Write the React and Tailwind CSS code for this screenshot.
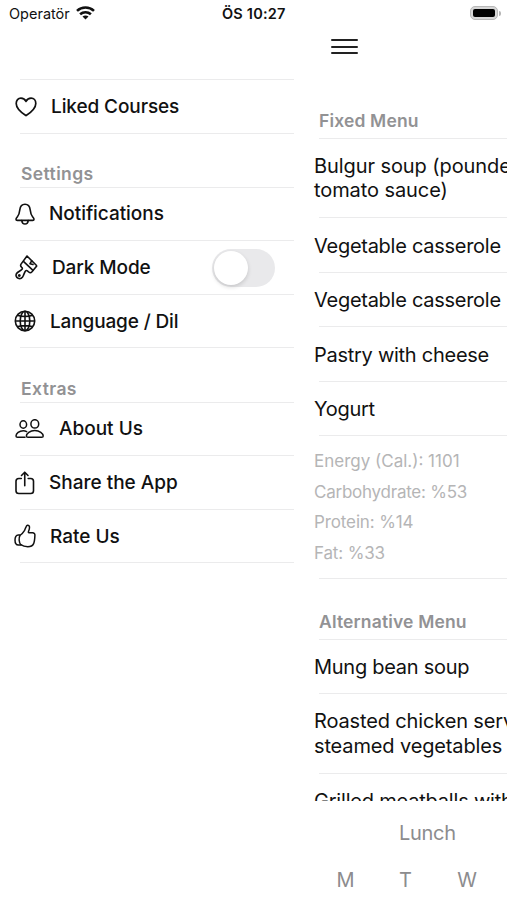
import React, { useState } from 'react';

function HeartIcon() {
  return (
    <svg width="22" height="20" viewBox="0 0 22 20" fill="none" stroke="currentColor" strokeWidth="1.7" strokeLinejoin="round">
      <path d="M11 18.6C9.5 17.6 1.200 12.3 1.200 6.4C1.200 3.3 3.2 1.200 5.900 1.200C8.300 1.200 10 2.400 11 4.400C12 2.400 13.700 1.200 16.100 1.200C18.800 1.200 20.800 3.300 20.800 6.400C20.800 12.300 12.500 17.600 11 18.600Z" />
    </svg>
  );
}

function BellIcon() {
  return (
    <svg width="20" height="22" viewBox="0 0 20 22" fill="none" stroke="currentColor" strokeWidth="1.600" strokeLinecap="round" strokeLinejoin="round">
      <path d="M10 1.200C7.400 1.200 5.200 3.300 4.800 6.800C4.400 10.600 4 12 2.300 14C1.500 15 1 15.600 1 16.300C1 17 1.500 17.400 2.300 17.400H17.700C18.500 17.400 19 17 19 16.300C19 15.600 18.500 15 17.700 14C16 12 15.600 10.600 15.200 6.800C14.800 3.300 12.600 1.200 10 1.200Z" />
      <path d="M6.800 17.600C7 19.800 8.300 21 10 21S13 19.800 13.200 17.600" />
    </svg>
  );
}

function BrushIcon() {
  return (
    <svg width="23" height="25" viewBox="0 0 23 25" fill="none" stroke="currentColor" strokeWidth="1.600" strokeLinecap="round" strokeLinejoin="round">
      <path d="M12 1L21.300 10.200C21.700 10.600 21.700 11.200 21.300 11.600L17 16.800C16 17.900 14.800 18 13.700 17L12.400 15.800C11.800 15.300 11 15.400 10.500 16C9.700 17 9.400 18.200 8.400 20.500C7.300 23.200 5.400 24.200 3.200 23.300C0.900 22.300 0.400 19.800 1.900 18.100C3.300 16.600 5.800 15.800 7 14.300C7.500 13.600 7.400 12.900 6.700 12.300L6.300 11.900C5.400 11 5.500 9.900 6.200 8.900Z" />
      <path d="M8.700 6.700L18 15.300M16.700 5.800L15 8.700L18 9.500" />
      <circle cx="4.300" cy="20.500" r="0.700" />
    </svg>
  );
}

function GlobeIcon() {
  return (
    <svg width="22" height="22" viewBox="0 0 22 22" fill="none" stroke="currentColor" strokeWidth="1.600">
      <circle cx="11" cy="11" r="9.700" />
      <ellipse cx="11" cy="11" rx="4.800" ry="9.700" />
      <path d="M11 1.300V20.700M1.300 11H20.700M3.400 5.300C7.500 6.800 14.500 6.800 18.600 5.300M3.400 16.700C7.500 15.200 14.500 15.200 18.600 16.700" />
    </svg>
  );
}

function PeopleIcon() {
  return (
    <svg width="30" height="20" viewBox="0 0 30 20" fill="none" stroke="currentColor" strokeWidth="1.500" strokeLinecap="round" strokeLinejoin="round">
      <ellipse cx="8.300" cy="5.500" rx="3.300" ry="3.700" />
      <ellipse cx="19.800" cy="4.900" rx="3.900" ry="4.200" />
      <path d="M10 18.300H2.500C1.500 18.300 1 17.800 1 17C1 14.500 4.200 11.800 8.300 11.800C9.700 11.800 10.700 12.100 11.700 12.600" />
      <path d="M12.900 18.300C11.900 18.300 11.400 17.800 11.400 17C11.400 14.400 15 11.600 19.800 11.600S28.200 14.400 28.200 17C28.200 17.800 27.700 18.300 26.700 18.300Z" />
    </svg>
  );
}

function ShareIcon() {
  return (
    <svg width="20" height="24" viewBox="0 0 20 24" fill="none" stroke="currentColor" strokeWidth="1.600" strokeLinecap="round" strokeLinejoin="round">
      <path d="M6.300 7.500H3.800C2 7.500 1 8.500 1 10.300V19.700C1 21.500 2 22.500 3.800 22.500H15.700C17.500 22.500 18.500 21.500 18.500 19.700V10.300C18.500 8.500 17.500 7.500 15.700 7.500H13.200" />
      <path d="M9.750 14.800V1.400M6.500 4.500L9.750 1.200L13 4.500" />
    </svg>
  );
}

function ThumbIcon() {
  return (
    <svg width="22" height="24" viewBox="0 0 22 24" fill="none" stroke="currentColor" strokeWidth="1.500" strokeLinecap="round" strokeLinejoin="round">
      <path d="M6 11.300C8 10.300 9.300 8.500 10.600 6.400C11.300 4.800 11.600 3.600 12.300 2.300C12.900 1.100 14.100 0.900 15 1.700C16 2.900 15.500 5 14.500 7.500C14.200 8.300 14.400 8.700 15 8.700H18.600C20.100 8.700 21 9.700 20.900 11.200C20.800 14.700 20.600 17.500 19.500 19.900C18.600 21.900 16.800 22.700 13.800 22.700C10.500 22.700 8.600 22 6.800 20.700C5 18.800 4.500 14 6 11.300Z" />
      <path d="M5.800 10.900H4.200C2.200 10.900 1 13.200 1 16S2.300 21 4.400 21H7" />
    </svg>
  );
}

function WifiIcon() {
  return (
    <svg width="19" height="14" viewBox="0 0 19 14" fill="none" stroke="currentColor" strokeWidth="2.600">
      <path d="M1 4.900C5.800 0.400 13.200 0.400 18 4.900" />
      <path d="M4.100 8.300C7.200 5.500 11.800 5.500 14.900 8.300" />
      <path d="M9.500 13.500L6.500 10.500C8 9.200 11 9.200 12.500 10.500Z" fill="currentColor" stroke="none" />
    </svg>
  );
}

function Divider() {
  return <div className="h-px shrink-0 bg-[#ebebec]" />;
}

function SidebarRow({ icon, iconClass, label, labelClass = 'pt-[2px]', height, children }) {
  return (
    <div className={`flex flex-col ${height}`}>
      <div className="flex min-h-0 flex-1 items-center">
        <div className={`flex shrink-0 items-center ${iconClass}`}>{icon}</div>
        <span className={`text-[19px] font-medium whitespace-nowrap ${labelClass}`}>{label}</span>
        {children}
      </div>
      <div className="pl-5"><Divider /></div>
    </div>
  );
}

function SidebarHeader({ title, height }) {
  return (
    <div className={`flex flex-col pl-5 ${height}`}>
      <h2 className="flex flex-1 items-end pb-px pl-px text-[17.500px] leading-6 font-semibold tracking-[0.400px] text-[#929294]">{title}</h2>
      <Divider />
    </div>
  );
}

function Sidebar() {
  const [dark, setDark] = useState(false);

  return (
    <nav className="flex w-[294px] shrink-0 flex-col pt-[51px]">
      <div className="pl-5"><Divider /></div>
      <SidebarRow icon={<HeartIcon />} iconClass="w-[51px] pl-[15px]" label="Liked Courses" labelClass="pt-[2px] tracking-[-0.100px]" height="h-[54px]" />
      <SidebarHeader title="Settings" height="h-[54px]" />
      <SidebarRow icon={<BellIcon />} iconClass="w-[49px] pl-[15px]" label="Notifications" labelClass="tracking-[-0.050px]" height="h-[53px]" />
      <SidebarRow icon={<BrushIcon />} iconClass="w-[52px] pl-[15px]" label="Dark Mode" labelClass="pt-[2px] tracking-[-0.100px]" height="h-[54px]">
        <button
          role="switch"
          aria-checked={dark}
          aria-label="Dark Mode"
          onClick={() => setDark(!dark)}
          className={`mr-[19px] ml-auto flex h-[38px] w-[63px] items-center rounded-full bg-[#e9e9eb] p-[2px] ${dark ? 'justify-end' : ''}`}
        >
          <span className="size-[34px] rounded-full bg-white shadow-[0_2px_4px_rgba(0,0,0,0.150)]" />
        </button>
      </SidebarRow>
      <SidebarRow icon={<GlobeIcon />} iconClass="w-[50px] pl-[14px]" label="Language / Dil" labelClass="pt-[2px] tracking-[-0.140px]" height="h-[53px]" />
      <SidebarHeader title="Extras" height="h-[55px]" />
      <SidebarRow icon={<PeopleIcon />} iconClass="w-[59px] pl-[15px]" label="About Us" labelClass="" height="h-[53px]" />
      <SidebarRow icon={<ShareIcon />} iconClass="w-[49px] pl-[15px]" label="Share the App" height="h-[54px]" />
      <SidebarRow icon={<ThumbIcon />} iconClass="w-[50px] pl-[14px]" label="Rate Us" height="h-[53px]" />
    </nav>
  );
}

function MenuHeader({ title, height }) {
  return (
    <div className={`flex flex-col pl-[25px] ${height}`}>
      <h2 className="flex flex-1 items-end pb-[5px] text-[17.500px] leading-6 font-semibold tracking-[0.160px] text-[#929294]">{title}</h2>
      <Divider />
    </div>
  );
}

function Dish({ lines, height, textClass = 'pt-[2px] tracking-[-0.270px]' }) {
  return (
    <div className={`flex shrink-0 flex-col ${height}`}>
      <div className={`flex flex-1 flex-col justify-center pl-5 text-[20px] leading-[24.500px] whitespace-nowrap ${textClass}`}>
        {lines.map((line) => (
          <span key={line}>{line}</span>
        ))}
      </div>
      <div className="pl-[25px]"><Divider /></div>
    </div>
  );
}

const NUTRITION = [
  { text: 'Energy (Cal.): 1101', tracking: '' },
  { text: 'Carbohydrate: %53', tracking: 'tracking-[-0.240px]' },
  { text: 'Protein: %14', tracking: 'tracking-[-0.120px]' },
  { text: 'Fat: %33', tracking: 'tracking-[-0.150px]' },
];

function MenuPage() {
  return (
    <main className="flex w-[213px] shrink-0 flex-col overflow-hidden">
      <button aria-label="Menu" className="mt-[11px] ml-[37px] flex h-[15px] w-[27px] flex-col justify-between">
        <span className="h-[2px] w-full rounded-full bg-[#222]" />
        <span className="h-[2px] w-full rounded-full bg-[#222]" />
        <span className="h-[2px] w-full rounded-full bg-[#222]" />
      </button>

      <div className="flex h-[747px] flex-col overflow-hidden">
        <MenuHeader title="Fixed Menu" height="h-[85px] shrink-0" />
        <Dish lines={['Bulgur soup (pounded', 'tomato sauce)']} height="h-[79px]" textClass="tracking-[-0.080px]" />
        <Dish lines={['Vegetable casserole']} height="h-[55px]" />
        <Dish lines={['Vegetable casserole']} height="h-[54px]" />
        <Dish lines={['Pastry with cheese']} height="h-[55px]" />
        <Dish lines={['Yogurt']} height="h-[54px]" />
        <div className="flex h-[143px] shrink-0 flex-col">
          <div className="flex-1 pt-[10px] pl-5 text-[17px] leading-[30.600px] whitespace-nowrap text-[#b5b5b6]">
            {NUTRITION.map((item) => (
              <div key={item.text} className={item.tracking}>{item.text}</div>
            ))}
          </div>
          <div className="pl-[25px]"><Divider /></div>
        </div>
        <MenuHeader title="Alternative Menu" height="h-[61px] shrink-0" />
        <Dish lines={['Mung bean soup']} height="h-[54px]" />
        <Dish lines={['Roasted chicken served', 'steamed vegetables']} height="h-[80px]" textClass="tracking-[-0.140px]" />
        <Dish lines={['Grilled meatballs with']} height="h-[55px]" textClass="tracking-[-0.200px]" />
      </div>

      <footer className="flex flex-1 flex-col text-[20px] leading-6 text-[#8c8c8e]">
        <div className="mt-[20px] pl-[105px] tracking-[-0.300px]">Lunch</div>
        <div className="mt-[23px] flex">
          <span className="ml-[21px] w-[60px] pl-[1px] text-center">M</span>
          <span className="w-[60px] pl-px text-center">T</span>
          <span className="w-[64px] text-center">W</span>
        </div>
      </footer>
    </main>
  );
}

export default function App() {
  return (
    <div className="flex h-[900px] w-[507px] flex-col overflow-hidden bg-white font-['Inter',sans-serif] text-[#111]">
      <header className="flex h-7 shrink-0 items-center text-[14.500px]">
        <span className="w-[76px] pl-[9px]">Operatör</span>
        <div className="w-[146px] pb-[2px]"><WifiIcon /></div>
        <span className="font-semibold tracking-[0.200px] whitespace-nowrap">ÖS 10:27</span>
        <div className="mr-[6px] ml-auto flex items-center pb-[2px]">
          <div className="h-[14px] w-[28px] rounded-[5px] border border-[#b8b8b8] bg-[#d6d6d6] p-[2px]">
            <div className="h-full w-full rounded-[2px] bg-black" />
          </div>
          <div className="ml-px h-[5px] w-[2px] rounded-r-full bg-[#b5b5b5]" />
        </div>
      </header>
      <div className="flex min-h-0 flex-1">
        <Sidebar />
        <MenuPage />
      </div>
    </div>
  );
}
